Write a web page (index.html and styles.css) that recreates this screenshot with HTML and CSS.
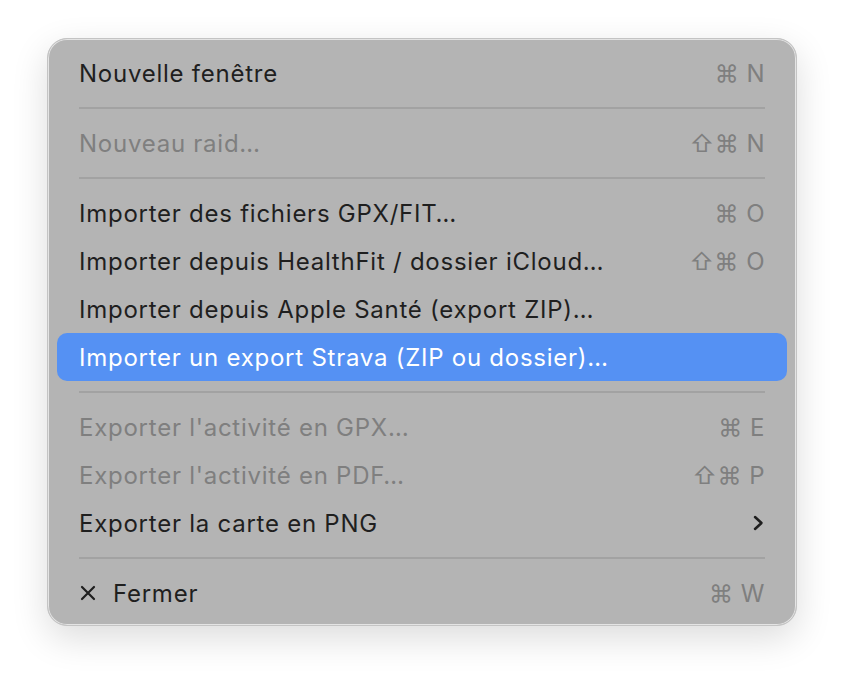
FILE: index.html
```html
<!DOCTYPE html>
<html lang="fr">
<head>
    <meta charset="UTF-8">
    <title>Fichier</title>
    <link rel="stylesheet" href="styles.css">
</head>
<body>
    <div class="menu">
        <div class="item"><span class="label">Nouvelle fenêtre</span><span class="keys">⌘ N</span></div>
        <div class="sep"></div>
        <div class="item off"><span class="label">Nouveau raid…</span><span class="keys">⇧⌘ N</span></div>
        <div class="sep"></div>
        <div class="item"><span class="label">Importer des fichiers GPX/FIT…</span><span class="keys">⌘ O</span></div>
        <div class="item"><span class="label">Importer depuis HealthFit / dossier iCloud…</span><span class="keys">⇧⌘ O</span></div>
        <div class="item"><span class="label">Importer depuis Apple Santé (export ZIP)…</span></div>
        <div class="item active"><span class="label">Importer un export Strava (ZIP ou dossier)…</span></div>
        <div class="sep"></div>
        <div class="item off"><span class="label">Exporter l'activité en GPX…</span><span class="keys">⌘ E</span></div>
        <div class="item off"><span class="label">Exporter l'activité en PDF…</span><span class="keys">⇧⌘ P</span></div>
        <div class="item"><span class="label">Exporter la carte en PNG</span>
            <svg class="chevron" width="12" height="16" viewBox="0 0 12 16"><path d="M3 2 L9.5 8 L3 14" fill="none" stroke="#1f1f1f" stroke-width="2.5" stroke-linecap="round" stroke-linejoin="round"/></svg>
        </div>
        <div class="sep"></div>
        <div class="item">
            <span class="label">
                <svg class="cross" width="18" height="18" viewBox="0 0 18 18"><path d="M3 3 L15 15 M15 3 L3 15" stroke="#1f1f1f" stroke-width="2.2" stroke-linecap="round"/></svg>
                Fermer
            </span>
            <span class="keys">⌘ W</span>
        </div>
    </div>
</body>
</html>
```

FILE: styles.css
```css
html, body {
    height: 100%;
}
body {
    margin: 0;
    padding: 38px 0 0 47px;
    box-sizing: border-box;
    background-color: #ffffff;
    font-family: Inter, "Noto Sans", sans-serif;
}
.menu {
    width: 750px;
    padding: 10px 9px 8px 9px;
    box-sizing: border-box;
    background-color: #b4b4b4;
    border-radius: 20px;
    border: 1px solid #c4c4c4;
    box-shadow: inset 0 0 0 1px #e4e4e4, 0 12px 36px rgba(0, 0, 0, 0.14);
}
.item {
    height: 48px;
    display: flex;
    align-items: center;
    justify-content: space-between;
    padding: 0 22px 0 22px;
    border-radius: 10px;
    font-size: 24px;
    letter-spacing: 0.75px;
    color: #1f1f1f;
}
.item.off {
    color: #7f7f7f;
}
.item.active {
    background-color: #5591f3;
    color: #ffffff;
}
.label {
    display: flex;
    align-items: center;
    gap: 16px;
}
.keys {
    color: #7f7f7f;
    letter-spacing: 0.5px;
}
.chevron {
    margin-right: 1px;
}
.sep {
    height: 2px;
    margin: 10px 22px 10px 22px;
    background-color: #a2a2a2;
}
```
